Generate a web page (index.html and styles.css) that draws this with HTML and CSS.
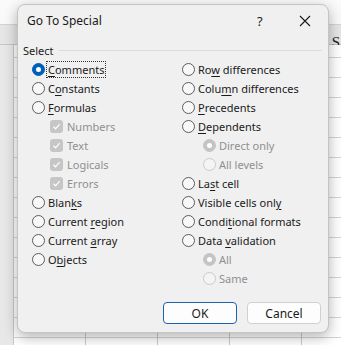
FILE: index.html
```html
<!DOCTYPE html>
<html lang="en">
<head>
    <meta charset="UTF-8">
    <title>Go To Special</title>
    <link rel="stylesheet" href="styles.css">
</head>
<body>
    <div class="sheet">
        <div class="ribbon"></div>
        <div class="col-head"><span class="col-letter">S</span></div>
        <div class="cells"></div>
    </div>

    <div class="dialog">
        <div class="title-bar">
            <span class="title">Go To Special</span>
            <span class="help">?</span>
            <svg class="close" width="12" height="12" viewBox="0 0 12 12"><path d="M1 1L11 11M11 1L1 11" stroke="#1a1a1a" stroke-width="1.1"/></svg>
        </div>
        <div class="group">
            <div class="legend"><span>Select</span><span class="rule"></span></div>
            <div class="options">
                <div class="col">
                    <div class="opt"><span class="radio checked"></span><span class="focus"><u>C</u>omments</span></div>
                    <div class="opt"><span class="radio"></span><span>C<u>o</u>nstants</span></div>
                    <div class="opt"><span class="radio"></span><span><u>F</u>ormulas</span></div>
                    <div class="opt sub-check disabled"><span class="check"><svg width="9" height="9" viewBox="0 0 9 9"><path d="M1.5 4.8L3.6 6.8L7.6 2.2" fill="none" stroke="#fff" stroke-width="1.2"/></svg></span><span>Numbers</span></div>
                    <div class="opt sub-check disabled"><span class="check"><svg width="9" height="9" viewBox="0 0 9 9"><path d="M1.5 4.8L3.6 6.8L7.6 2.2" fill="none" stroke="#fff" stroke-width="1.2"/></svg></span><span>Text</span></div>
                    <div class="opt sub-check disabled"><span class="check"><svg width="9" height="9" viewBox="0 0 9 9"><path d="M1.5 4.8L3.6 6.8L7.6 2.2" fill="none" stroke="#fff" stroke-width="1.2"/></svg></span><span>Logicals</span></div>
                    <div class="opt sub-check disabled"><span class="check"><svg width="9" height="9" viewBox="0 0 9 9"><path d="M1.5 4.8L3.6 6.8L7.6 2.2" fill="none" stroke="#fff" stroke-width="1.2"/></svg></span><span>Errors</span></div>
                    <div class="opt"><span class="radio"></span><span>Blan<u>k</u>s</span></div>
                    <div class="opt"><span class="radio"></span><span>Current <u>r</u>egion</span></div>
                    <div class="opt"><span class="radio"></span><span>Current <u>a</u>rray</span></div>
                    <div class="opt"><span class="radio"></span><span>O<u>b</u>jects</span></div>
                </div>
                <div class="col">
                    <div class="opt"><span class="radio"></span><span>Ro<u>w</u> differences</span></div>
                    <div class="opt"><span class="radio"></span><span>Colu<u>m</u>n differences</span></div>
                    <div class="opt"><span class="radio"></span><span><u>P</u>recedents</span></div>
                    <div class="opt"><span class="radio"></span><span><u>D</u>ependents</span></div>
                    <div class="opt sub-radio disabled"><span class="radio checked"></span><span>Direct only</span></div>
                    <div class="opt sub-radio disabled"><span class="radio"></span><span>All levels</span></div>
                    <div class="opt"><span class="radio"></span><span>La<u>s</u>t cell</span></div>
                    <div class="opt"><span class="radio"></span><span>Visible cells onl<u>y</u></span></div>
                    <div class="opt"><span class="radio"></span><span>Condi<u>t</u>ional formats</span></div>
                    <div class="opt"><span class="radio"></span><span>Data <u>v</u>alidation</span></div>
                    <div class="opt sub-radio disabled"><span class="radio checked"></span><span>All</span></div>
                    <div class="opt sub-radio disabled"><span class="radio"></span><span>Same</span></div>
                </div>
            </div>
        </div>
        <div class="buttons">
            <button class="btn primary">OK</button>
            <button class="btn">Cancel</button>
        </div>
    </div>
</body>
</html>
```

FILE: styles.css
```css
body {
    margin: 0;
    font-family: "Noto Sans", "Open Sans", sans-serif;
    font-size: 11px;
    color: #1a1a1a;
    background-color: #fff;
    overflow: hidden;
}
.sheet {
    height: 345px;
    display: flex;
    flex-direction: column;
}
.ribbon {
    height: 24px;
    background-color: #fafafa;
}
.col-head {
    height: 19px;
    background-color: #e6e6e6;
    border-top: 1px solid #d4d4d4;
    border-bottom: 1px solid #c6c6c6;
    display: flex;
    justify-content: flex-end;
    align-items: flex-end;
}
.col-letter {
    font-family: "Liberation Serif", serif;
    font-size: 15px;
    color: #222;
    padding-right: 1px;
    line-height: 15px;
    margin-bottom: -6px;
}
.cells {
    flex: 1;
    background-color: #fff;
    background-image:
        linear-gradient(to right, #e8e8e8 0, #e8e8e8 13px, transparent 13px),
        repeating-linear-gradient(to right, #c9c9c9 0, #c9c9c9 1px, transparent 1px, transparent 72px),
        repeating-linear-gradient(to bottom, #d4d4d4 0, #d4d4d4 1px, transparent 1px, transparent 20px);
    background-position: 0 0, 13px 0, 0 12px;
}
.dialog {
    position: absolute;
    left: 17px;
    top: 4px;
    width: 310px;
    height: 327px;
    background-color: #f0f0f0;
    border: 1px solid #c4c4c4;
    border-radius: 8px;
    box-shadow: 0 4px 14px rgba(0, 0, 0, 0.3);
    display: flex;
    flex-direction: column;
}
.title-bar {
    height: 31px;
    display: flex;
    align-items: center;
    padding-left: 9px;
    font-size: 12px;
}
.title {
    flex: 1;
}
.help {
    width: 42px;
    font-size: 13px;
}
.close {
    margin-right: 17px;
}
.group {
    padding: 7px 6px 0 5px;
}
.legend {
    display: flex;
    align-items: center;
    gap: 5px;
    height: 14px;
}
.rule {
    flex: 1;
    border-top: 1px solid #dcdcdc;
}
.options {
    display: grid;
    grid-template-columns: 150px 1fr;
    padding: 3px 0 0 9px;
}
.opt {
    height: 19px;
    display: flex;
    align-items: center;
    gap: 3px;
}
.opt u {
    text-decoration-thickness: 1px;
    text-underline-offset: 2px;
}
.radio {
    width: 11px;
    height: 11px;
    border: 1px solid #5c5c5c;
    border-radius: 50%;
    background-color: #f8f8f8;
    display: flex;
    align-items: center;
    justify-content: center;
}
.radio.checked {
    background-color: #005fb8;
    border-color: #005fb8;
}
.radio.checked::after {
    content: "";
    width: 5px;
    height: 5px;
    border-radius: 50%;
    background-color: #fff;
}
.focus {
    outline: 1px dotted #333;
    outline-offset: 0;
    padding: 0 1px;
    margin-left: -1px;
}
.disabled {
    color: #8f8f8f;
}
.sub-check {
    padding-left: 18px;
    gap: 4px;
}
.sub-radio {
    padding-left: 21px;
    gap: 3px;
}
.disabled .radio {
    border-color: #cacaca;
    background-color: #f4f4f4;
}
.disabled .radio.checked {
    background-color: #c4c4c4;
    border-color: #c4c4c4;
}
.check {
    width: 13px;
    height: 13px;
    border-radius: 3px;
    background-color: #c6c6c6;
    display: flex;
    align-items: center;
    justify-content: center;
}
.buttons {
    margin-top: auto;
    display: flex;
    justify-content: flex-end;
    gap: 10px;
    padding: 0 7px 8px 0;
}
.btn {
    width: 74px;
    height: 22px;
    font-family: inherit;
    font-size: 12px;
    color: #1a1a1a;
    background-color: #fdfdfd;
    border: 1px solid #d0d0d0;
    border-radius: 4px;
    padding: 0;
}
.btn.primary {
    border-color: #1b63ae;
}
```
